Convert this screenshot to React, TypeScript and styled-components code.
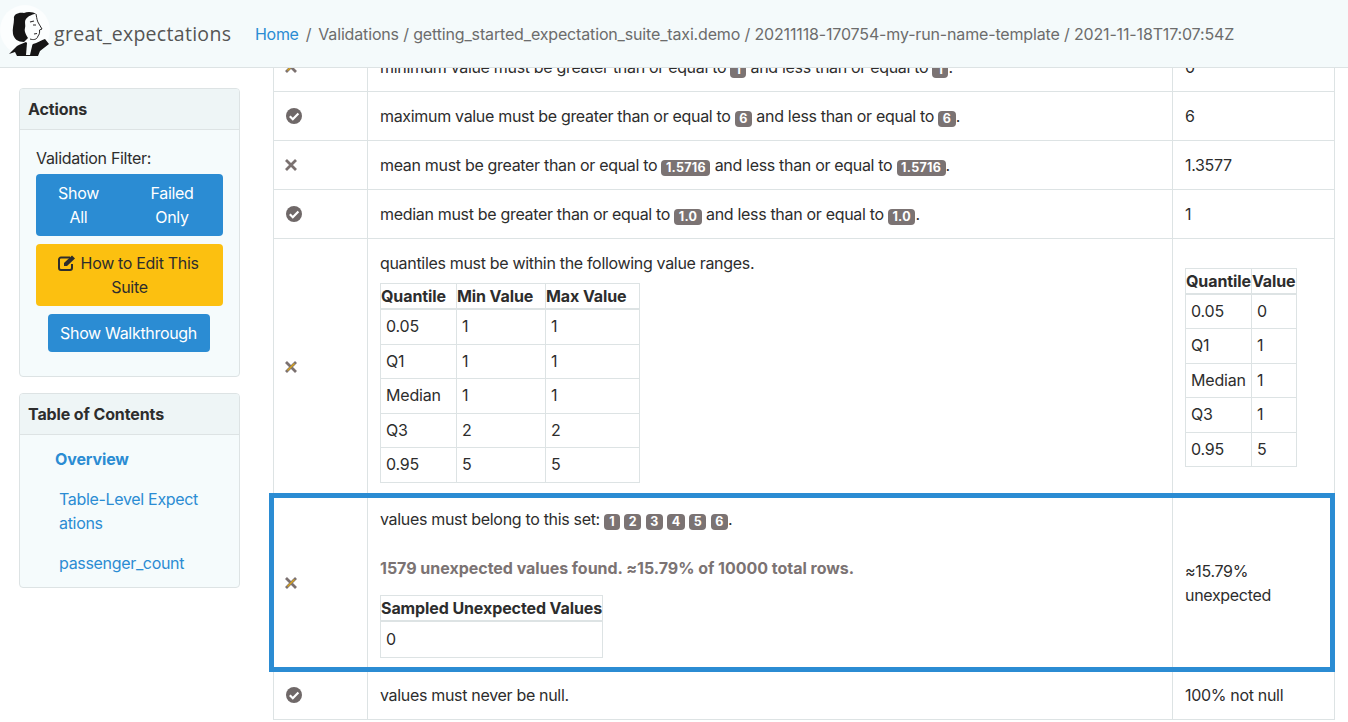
import React from "react";
import styled, { createGlobalStyle } from "styled-components";

const Global = createGlobalStyle`
  html, body { margin: 0; padding: 0; background: #fff; }
  body { font-family: Inter, "Liberation Sans", sans-serif; font-size: 16px; line-height: 24px; color: #2d2d2d; overflow: hidden; letter-spacing: -.32px; }
`;

const Page = styled.div`
  width: 1348px; height: 722px; overflow: hidden; display: flex; flex-direction: column;
`;
const Navbar = styled.header`
  flex: 0 0 68px; box-sizing: border-box; height: 68px; display: flex; align-items: center;
  background: #f4fafb; border-bottom: 1px solid #dde3e4; position: relative; z-index: 2;
`;
const Brand = styled.div`
  display: flex; align-items: center; width: 255px; padding-left: 9px; box-sizing: border-box; flex: none;
`;
const BrandName = styled.span`
  font-family: "Open Sans", sans-serif; font-size: 19.5px; letter-spacing: .3px; color: #555; margin-left: 3px; margin-top: 1px;
`;
const Crumbs = styled.nav`
  font-size: 16px; color: #6c6c6c; white-space: nowrap; display: flex; gap: 7px; letter-spacing: -.155px;
  a { color: #2b8cd3; letter-spacing: -.3px; }
`;
const Body = styled.div`
  flex: 1; display: flex; min-height: 0; position: relative;
`;
const Sidebar = styled.aside`
  flex: 0 0 273px; box-sizing: border-box; padding: 20px 33px 0 19px; display: flex; flex-direction: column; gap: 16px;
`;
const Card = styled.section`
  border: 1px solid #dde3e4; border-radius: 4px; background: #f5fbfc;
`;
const CardHeader = styled.h2`
  margin: 0; height: 41px; box-sizing: border-box; padding: 8px; font-size: 16px; line-height: 24px; font-weight: 700; color: #2d2d2d; letter-spacing: -.12px;
  background: #eef5f6; border-bottom: 1px solid #dde3e4; border-radius: 3px 3px 0 0;
`;
const ActionsBody = styled.div`
  padding: 16px 16px 24px; display: flex; flex-direction: column; align-items: stretch;
`;
const FilterLabel = styled.div`
  margin-bottom: 4px;
`;
const ButtonGroup = styled.div`
  display: flex; background: #2b8cd3; border-radius: 4px; height: 62px; margin-bottom: 8px;
`;
const GroupButton = styled.button<{ $w: number }>`
  flex: 0 0 ${(p) => p.$w}px; border: 0; background: transparent; color: #fff; font: inherit; letter-spacing: inherit; padding: 7px 14px; line-height: 24px;
`;
const EditButton = styled.button`
  border: 0; background: #fcc010; color: #2d2d2d; font: inherit; letter-spacing: inherit; padding: 7px 12px; border-radius: 4px; height: 62px; margin-bottom: 8px;
  svg { vertical-align: -2px; margin-left: -2px; }
`;
const WalkButton = styled.button`
  align-self: center; margin-right: 2px; border: 0; background: #2b8cd3; color: #fff; font: inherit; letter-spacing: inherit; height: 38px; width: 162px; padding: 0; border-radius: 4px;
`;
const TocBody = styled.div`
  padding: 12px 16px 12px 36px; display: flex; flex-direction: column; gap: 16px; color: #2b8cd3;
`;
const TocActive = styled.div`
  font-weight: 700; color: #2b8cd3; margin-left: -1px; letter-spacing: -.12px;
`;
const TocLink = styled.div`
  margin-left: 3px; width: 141px; word-break: break-all;
`;
const Main = styled.main`
  flex: 1; min-width: 0; overflow: hidden;
`;
const Results = styled.table`
  border-collapse: collapse; table-layout: fixed; width: 1061px; margin-top: -26px;
  & > tbody > tr > td { border: 1px solid #dde3e4; padding: 12px; vertical-align: middle; height: 24px; }
`;
const Highlight = styled.div`
  position: absolute; left: 269px; top: 425px; width: 1066px; height: 179px; box-sizing: border-box; border: 5px solid #2b8cd3; pointer-events: none;
`;
const Badge = styled.span`
  display: inline-block; background: #7b7373; color: #fff; font-size: 12.5px; font-weight: 700; line-height: 16px; height: 16px; min-width: 7px; text-align: center; padding: 0 4.5px; border-radius: 4px; letter-spacing: .3px; vertical-align: -1px;
`;
const Inner = styled.table<{ $width?: number; $top?: number; $row?: number }>`
  border-collapse: collapse; margin-top: ${(p) => p.$top ?? 0}px;
  ${(p) => (p.$width ? `width: ${p.$width}px;` : "")}
  th, td { border: 1px solid #dde3e4; }
  th { font-weight: 700; text-align: left; padding: 0; height: 24px; line-height: 24px; border-bottom-width: 2px; letter-spacing: -.1px; white-space: nowrap; }
  td { padding: 5px; height: ${(p) => p.$row ?? 23.6}px; line-height: ${(p) => p.$row ?? 23.6}px; letter-spacing: -.2px; }
`;
const Spaced = styled.div`
  padding-bottom: 1px;
`;
const SetCell = styled.div`
  margin-top: -2px;
`;
const Warn = styled.p`
  margin: 25px 0 15px; font-weight: 700; color: #7b7373; letter-spacing: -.02px;
`;
const Line = styled.div``;

const Check = () => (
  <svg width="16" height="16" viewBox="0 0 16 16" style={{ display: "block" }}>
    <circle cx="8" cy="8" r="8" fill="#6f6868" />
    <path d="M3.8 8.2 6.8 11.2 12.4 5.4" fill="none" stroke="#fff" strokeWidth="2.2" />
  </svg>
);
const Cross = ({ tint }: { tint?: boolean }) => (
  <svg width="12" height="12" viewBox="0 0 12 12" style={{ display: "block", marginLeft: -1 }}>
    <path d="M1 1 11 11M11 1 1 11" fill="none" stroke="#7b7170" strokeWidth="2.8" />
    {tint && <path d="M2.5 9.5 9.5 2.5" fill="none" stroke="#d9a41c" strokeWidth="1.4" />}
  </svg>
);
const Logo = () => (
  <svg width="42" height="46" viewBox="0 0 42 46" style={{ overflow: "visible", flex: "none" }}>
    <circle cx="16" cy="19" r="25" fill="#fff" opacity=".7" />
    <path d="M5 8C4 3 10 1 15 2c4-2 10-1 12 1-3 0-8 2-10 5-2 2 0 7-1 9-1 3 1 7 3 10l-4 4C9 31 5 28 4 23 3 18 5 13 5 8Z" fill="#161515" />
    <path d="M27 3c1 5 1 7 3 10l3 5-2.500 1c.5 3-.5 5-1.500 6-1 4-5 4-8 3" fill="none" stroke="#2a2828" strokeWidth="1" />
    <path d="M21 11l4-1M24 14h3M25 23l3-.5" fill="none" stroke="#2a2828" strokeWidth="1.200" />
    <path d="M0 43l8-8c3-2 7-3 9-4l4 4 3-2c4-1 9-4 12-5l4 5-9 7-2 5H8l-2-4Z" fill="#161515" />
    <path d="M18 32l6-1-3 13h-4Z" fill="#f7fbfb" />
  </svg>
);
const Edit = () => (
  <svg width="18" height="16" viewBox="0 0 18 16">
    <path d="M12 2.500H3a2 2 0 0 0-2 2V13a2 2 0 0 0 2 2h9a2 2 0 0 0 2-2V9" fill="none" stroke="#2d2d2d" strokeWidth="2" />
    <path d="M6 8 14 .5l3 3L9 11H6Z" fill="#2d2d2d" />
  </svg>
);

const Bound = ({ head, v }: { head: string; v: string }) => (
  <>{head} must be greater than or equal to <Badge>{v}</Badge> and less than or equal to <Badge>{v}</Badge>.</>
);

const QMin = [["0.05","1","1"],["Q1","1","1"],["Median","1","1"],["Q3","2","2"],["0.95","5","5"]];
const QObs = [["0.05","0"],["Q1","1"],["Median","1"],["Q3","1"],["0.95","5"]];

export default function App() {
  return (
    <Page>
      <Global />
      <Navbar>
        <Brand><Logo /><BrandName>great_expectations</BrandName></Brand>
        <Crumbs>
          <a>Home</a><span>/</span>
          <span>Validations / getting_started_expectation_suite_taxi.demo / 20211118-170754-my-run-name-template / 2021-11-18T17:07:54Z</span>
        </Crumbs>
      </Navbar>
      <Body>
        <Sidebar>
          <Card>
            <CardHeader>Actions</CardHeader>
            <ActionsBody>
              <FilterLabel>Validation Filter:</FilterLabel>
              <ButtonGroup>
                <GroupButton $w={85}>Show All</GroupButton>
                <GroupButton $w={102}>Failed Only</GroupButton>
              </ButtonGroup>
              <EditButton><Edit /> How to Edit This Suite</EditButton>
              <WalkButton>Show Walkthrough</WalkButton>
            </ActionsBody>
          </Card>
          <Card>
            <CardHeader>Table of Contents</CardHeader>
            <TocBody>
              <TocActive>Overview</TocActive>
              <TocLink>Table-Level Expectations</TocLink>
              <TocLink>passenger_count</TocLink>
            </TocBody>
          </Card>
        </Sidebar>
        <Main>
          <Results>
            <colgroup>
              <col style={{ width: 94 }} /><col style={{ width: 805 }} /><col style={{ width: 162 }} />
            </colgroup>
            <tbody>
              <tr><td><Cross tint /></td><td><Bound head="minimum value" v="1" /></td><td>0</td></tr>
              <tr><td><Check /></td><td><Bound head="maximum value" v="6" /></td><td>6</td></tr>
              <tr><td><Cross /></td><td><Bound head="mean" v="1.5716" /></td><td>1.3577</td></tr>
              <tr><td><Check /></td><td><Bound head="median" v="1.0" /></td><td>1</td></tr>
              <tr>
                <td><Cross tint /></td>
                <td>
                  <Spaced>
                    <Line>quantiles must be within the following value ranges.</Line>
                    <Inner $width={260} $top={8}>
                      <thead><tr><th>Quantile</th><th>Min Value</th><th>Max Value</th></tr></thead>
                      <tbody>{QMin.map((r) => <tr key={r[0]}>{r.map((c, i) => <td key={i}>{c}</td>)}</tr>)}</tbody>
                    </Inner>
                  </Spaced>
                </td>
                <td>
                  <Inner>
                    <thead><tr><th>Quantile</th><th>Value</th></tr></thead>
                    <tbody>{QObs.map((r) => <tr key={r[0]}>{r.map((c, i) => <td key={i}>{c}</td>)}</tr>)}</tbody>
                  </Inner>
                </td>
              </tr>
              <tr>
                <td><Cross tint /></td>
                <td>
                  <SetCell>
                    <Line>values must belong to this set: <Badge>1</Badge> <Badge>2</Badge> <Badge>3</Badge> <Badge>4</Badge> <Badge>5</Badge> <Badge>6</Badge>.</Line>
                    <Warn>1579 unexpected values found. ≈15.79% of 10000 total rows.</Warn>
                    <Inner $width={222} $row={25}>
                      <thead><tr><th>Sampled Unexpected Values</th></tr></thead>
                      <tbody><tr><td>0</td></tr></tbody>
                    </Inner>
                  </SetCell>
                </td>
                <td>≈15.79% unexpected</td>
              </tr>
              <tr><td><Check /></td><td>values must never be null.</td><td>100% not null</td></tr>
            </tbody>
          </Results>
          <Highlight />
        </Main>
      </Body>
    </Page>
  );
}
